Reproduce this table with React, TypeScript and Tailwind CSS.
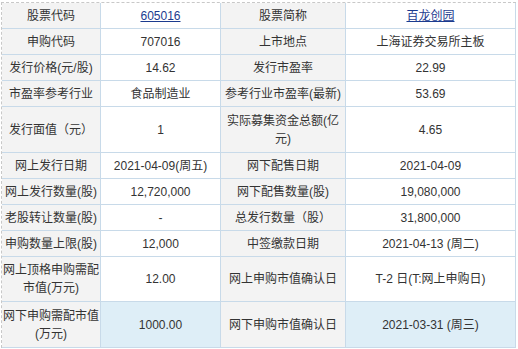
import React from 'react'

type Cell = { text: string; link?: boolean }
type Row = { h: string; cells: [Cell, Cell, Cell, Cell]; hl?: boolean }

// 新股发行资料表
const rows: Row[] = [
  { h: 'h-[26px]', cells: [{ text: '股票代码' }, { text: '605016', link: true }, { text: '股票简称' }, { text: '百龙创园', link: true }] },
  { h: 'h-[26px]', cells: [{ text: '申购代码' }, { text: '707016' }, { text: '上市地点' }, { text: '上海证券交易所主板' }] },
  { h: 'h-[26px]', cells: [{ text: '发行价格(元/股)' }, { text: '14.62' }, { text: '发行市盈率' }, { text: '22.99' }] },
  { h: 'h-[26px]', cells: [{ text: '市盈率参考行业' }, { text: '食品制造业' }, { text: '参考行业市盈率(最新)' }, { text: '53.69' }] },
  { h: 'h-[46px]', cells: [{ text: '发行面值（元）' }, { text: '1' }, { text: '实际募集资金总额(亿元)' }, { text: '4.65' }] },
  { h: 'h-[26px]', cells: [{ text: '网上发行日期' }, { text: '2021-04-09(周五)' }, { text: '网下配售日期' }, { text: '2021-04-09' }] },
  { h: 'h-[26px]', cells: [{ text: '网上发行数量(股)' }, { text: '12,720,000' }, { text: '网下配售数量(股)' }, { text: '19,080,000' }] },
  { h: 'h-[26px]', cells: [{ text: '老股转让数量(股)' }, { text: '-' }, { text: '总发行数量（股）' }, { text: '31,800,000' }] },
  { h: 'h-[26px]', cells: [{ text: '申购数量上限(股)' }, { text: '12,000' }, { text: '中签缴款日期' }, { text: '2021-04-13 (周二)' }] },
  { h: 'h-[45px]', cells: [{ text: '网上顶格申购需配市值(万元)' }, { text: '12.00' }, { text: '网上申购市值确认日' }, { text: 'T-2 日(T:网上申购日)' }] },
  { h: 'h-[46px]', hl: true, cells: [{ text: '网下申购需配市值(万元)' }, { text: '1000.00' }, { text: '网下申购市值确认日' }, { text: '2021-03-31 (周三)' }] },
]

export default function App() {
  return (
    <div
      className="min-h-screen bg-white text-[12px] leading-[18px] text-[#333]"
      style={{ fontFamily: '"Liberation Sans", Arial, "Noto Sans CJK SC", sans-serif' }}
    >
      <div className="ml-[1px] pt-[2px]">
        <div className="w-[515px] border-l border-t border-dashed border-[#c8c8c8]">
          {rows.map((row, i) => (
            <div key={i} className={`grid grid-cols-[99px_120px_125px_170px] ${row.h}`}>
              {row.cells.map((cell, j) => {
                const isLabel = j % 2 === 0
                const bg = isLabel ? 'bg-[#f3f3f3]' : row.hl ? 'bg-[#deeef7]' : 'bg-white'
                return (
                  <div
                    key={j}
                    className={`flex items-center justify-center text-center border-r border-b border-[#c8dae9] ${bg} ${j === 2 ? 'px-[2px]' : ''}`}
                  >
                    {cell.link ? (
                      <a href="#" className="text-[#1b3b8f] underline">
                        {cell.text}
                      </a>
                    ) : (
                      <span>{cell.text}</span>
                    )}
                  </div>
                )
              })}
            </div>
          ))}
        </div>
      </div>
    </div>
  )
}
